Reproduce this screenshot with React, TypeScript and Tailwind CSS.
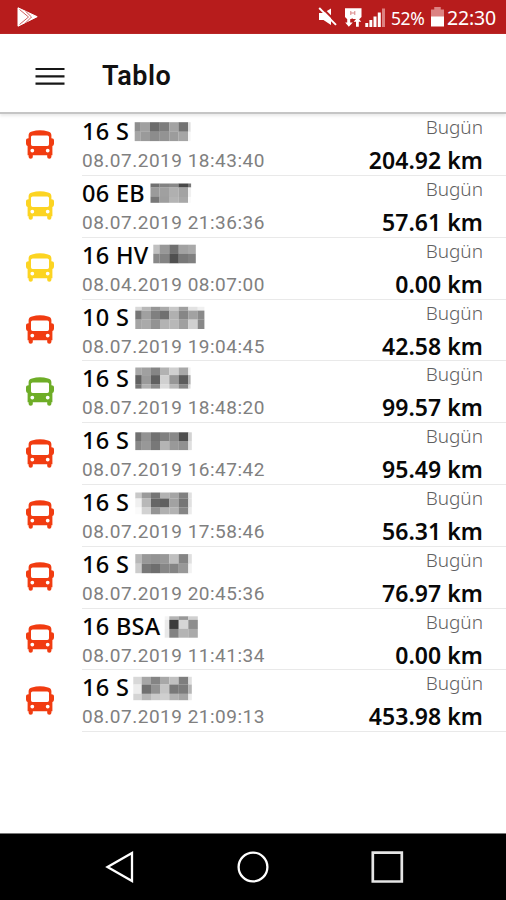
type Mosaic = { edges: number[]; tops: number[]; shades: string[] };
type Vehicle = {
  plate: string;
  date: string;
  km: string;
  tone: string;
  mosaic: Mosaic;
};

const RED = 'text-[#f13c11]';
const YELLOW = 'text-[#fcd422]';
const GREEN = 'text-[#6ead27]';

// Each shade row lists one grey level (two hex digits) per cell.
const vehicles: Vehicle[] = [
  { plate: '16 S', date: '08.07.2019 18:43:40', km: '204.92 km', tone: RED,
    mosaic: { edges: [134.7, 140.7, 150, 159.7, 169.3, 178.5, 188, 190.5], tops: [8.2, 17.7, 27], shades: ['8e a0 6c 7d a3 72 e0', 'a5 9a 8c 93 9c a5 f5'] } },
  { plate: '06 EB', date: '08.07.2019 21:36:36', km: '57.61 km', tone: YELLOW,
    mosaic: { edges: [150.5, 159.5, 169, 178.5, 188, 191], tops: [7.5, 11.5, 20.9, 26.7], shades: ['70 82 88 48 78', '9b a0 b0 a3 f0', '78 9e b4 a8 fa'] } },
  { plate: '16 HV', date: '08.04.2019 08:07:00', km: '0.00 km', tone: YELLOW,
    mosaic: { edges: [153.3, 159.5, 169.3, 178.7, 188, 195.7], tops: [6.7, 15.8, 25.2], shades: ['c0 98 70 a2 a9', '88 83 50 78 80'] } },
  { plate: '10 S', date: '08.07.2019 19:04:45', km: '42.58 km', tone: RED,
    mosaic: { edges: [135.3, 141.7, 151, 160, 169.3, 178.7, 188.3, 197.7, 204.3], tops: [6.8, 10.6, 19.6, 28.9], shades: ['d8 b8 96 aa c8 a0 e2 f0', '76 a0 80 70 b0 86 a2 8a', 'a4 aa 93 b3 b8 a0 d0 88'] } },
  { plate: '16 S', date: '08.07.2019 18:48:20', km: '99.57 km', tone: GREEN,
    mosaic: { edges: [135.3, 141.7, 151, 160, 169.3, 178.7, 188.3, 190.5], tops: [6.5, 14.1, 23.5, 27.5], shades: ['a8 a0 85 b2 cf a8 f2', '60 9a 60 d0 97 5c b0', '76 b0 8c dc b8 88 e0'] } },
  { plate: '16 S', date: '08.07.2019 16:47:42', km: '95.49 km', tone: RED,
    mosaic: { edges: [135.3, 141.7, 151, 160, 169.3, 178.7, 188.3, 191.7], tops: [9.3, 18, 27], shades: ['70 92 70 80 88 4e d2', '88 98 78 b4 99 90 df'] } },
  { plate: '16 S', date: '08.07.2019 17:58:46', km: '56.31 km', tone: RED,
    mosaic: { edges: [135.3, 141.7, 151, 160, 169.3, 178.7, 188.3, 191.7], tops: [7.5, 13.5, 22.5, 29.2], shades: ['c8 9a 76 b2 a5 80 e0', 'f0 b8 66 60 a2 75 e0', 'fa d2 94 b0 b2 85 eb'] } },
  { plate: '16 S', date: '08.07.2019 20:45:36', km: '76.97 km', tone: RED,
    mosaic: { edges: [135.3, 141.7, 151, 160, 169.3, 178.7, 188.3, 191.7], tops: [7.1, 16.7, 26.1], shades: ['b8 98 93 98 bf 84 df', 'cc 78 6e 86 84 98 f2'] } },
  { plate: '16 BSA', date: '08.07.2019 11:41:34', km: '0.00 km', tone: RED,
    mosaic: { edges: [164.7, 169.3, 178.7, 188.3, 197.7], tops: [7.3, 10.9, 19.9, 28.6], shades: ['f4 b4 98 d0', 'ea 3c d6 8e', 'e8 82 b4 aa'] } },
  { plate: '16 S', date: '08.07.2019 21:09:13', km: '453.98 km', tone: RED,
    mosaic: { edges: [133.3, 141.7, 151, 160, 169.3, 178.7, 188.3, 191.7], tops: [6.8, 14.5, 23.8, 30.1], shades: ['d8 a6 84 a8 c0 7e df', 'ec 70 92 c5 78 7c b5', 'd4 b6 ca cf b2 a5 ec'] } },
];

function PlateMosaic({ mosaic }: { mosaic: Mosaic }) {
  const { edges, tops, shades } = mosaic;
  return (
    <svg width="130" height="32" viewBox="82 0 130 32" className="absolute left-0 top-0">
      {shades.map((line, r) =>
        line.split(' ').map((s, c) => (
          <rect
            key={`${r}-${c}`}
            x={edges[c]}
            y={tops[r]}
            width={edges[c + 1] - edges[c] + 0.1}
            height={tops[r + 1] - tops[r] + 0.1}
            fill={`#${s}${s}${s}`}
          />
        )),
      )}
    </svg>
  );
}

function BusIcon() {
  return (
    <svg width="28" height="29" viewBox="0 0 28 29" fill="currentColor">
      <path
        fillRule="evenodd"
        d="M2.6 5.2Q2.6 2.2 6 1.4Q14-.8 22 1.4Q25.4 2.2 25.4 5.2V8.2Q28 8.2 28 10.5V13.5Q28 15.6 26.4 16V25.2H25.4V27Q25.4 28.7 23.3 28.7Q21.2 28.7 21.2 27V25.2H6.8V27Q6.8 28.7 4.7 28.7Q2.6 28.7 2.6 27V25.2H1.6V16Q0 15.6 0 13.5V10.5Q0 8.2 2.6 8.2ZM6.6 5.4Q5 5.4 5 7V14.2Q5 16 6.6 16H21.4Q23 16 23 14.2V7Q23 5.4 21.4 5.4ZM6.3 18.7A1.9 1.9 0 1 0 6.3 22.5A1.9 1.9 0 1 0 6.3 18.7ZM21.7 18.7A1.9 1.9 0 1 0 21.7 22.5A1.9 1.9 0 1 0 21.7 18.7Z"
      />
    </svg>
  );
}

function Row({ v }: { v: Vehicle }) {
  return (
    <li className="flex h-[61.8px] pl-[26px]">
      <div className={`w-14 shrink-0 pt-[15.5px] ${v.tone}`}>
        <BusIcon />
      </div>
      <div className="relative flex grow justify-between border-b border-[#e9e9e9] pr-[23px]">
        <PlateMosaic mosaic={v.mosaic} />
        <div className="flex flex-col whitespace-nowrap">
          <span className="pt-1 font-['Noto_Sans'] text-[23.5px] leading-[26px] font-medium tracking-[0.3px] text-[#040404]">{v.plate}</span>
          <span className="pt-[5px] font-['Roboto'] text-[19px] leading-[24px] font-normal tracking-[0.5px] text-[#808080]">{v.date}</span>
        </div>
        <div className="flex flex-col items-end whitespace-nowrap font-['Noto_Sans']">
          <span className="text-[19px] leading-[26px] font-light text-[#606060]">Bugün</span>
          <span className="pt-[7px] text-[23px] leading-[26px] font-semibold tracking-[0.05px] text-[#080808]">{v.km}</span>
        </div>
      </div>
    </li>
  );
}

function StatusBar() {
  return (
    <header className="flex h-[34px] shrink-0 items-center justify-between bg-[#b71c1c] pr-2 pl-[17px] text-white">
      <svg width="21" height="20" viewBox="0 0 21 20">
        <path d="M1 .8L20.2 9.7L1 19.2Z" fill="#fff" stroke="#fff" strokeLinejoin="round" />
        <path d="M2.5 2.5L11.5 10L2.5 17.5M8.5 4.2L14.5 10L8.5 16" fill="none" stroke="#d06060" strokeWidth="1" />
      </svg>
      <div className="flex items-center">
        <svg width="69" height="24" viewBox="317 5 69 24" fill="#fff">
          <path d="M319 13H323.5L331 8.5V25L323.5 20H319Z" />
          <path d="M321 6.8L338 23.8" stroke="#b71c1c" strokeWidth="2" />
          <path d="M319.2 8L336 24.8" stroke="#fff" strokeWidth="1.9" />
          <path d="M345 8.3H361.5V17L359.5 19H347L345 17Z" />
          <path d="M350.8 11V15M354.8 11V15M350.8 13H354.8" stroke="#d98484" strokeWidth="1" />
          <path d="M347.2 17H350.2V22.5H352.8L348.8 26.8L345.2 22.5H347.2ZM356 26.8V21.8H353.6L357.6 17.2L361.2 21.8H358.8V26.8Z" />
          <path d="M352.2 18.5V22" stroke="#b71c1c" strokeWidth="1.4" />
          <path d="M365.3 23H368.2V27H365.3ZM369.4 20H372.3V27H369.4ZM373.5 16.5H376.5V27H373.5ZM377.8 12.5H380.8V27H377.8Z" />
          <path d="M382 8.5H385V27H382Z" fill="#dc8181" />
        </svg>
        <span className="ml-[5px] w-[34px] pt-0.5 font-['Noto_Sans'] text-[17.5px] leading-6 tracking-[-0.4px]">52%</span>
        <svg width="13" height="20" viewBox="0 0 14 20" preserveAspectRatio="none" className="ml-[6px]">
          <path d="M3.5 0H10.5V2.5H14V10H0V2.5H3.5Z" fill="#dc8282" />
          <path d="M0 9.5H14V19.5H0Z" fill="#fff" />
        </svg>
        <span className="ml-[3px] w-[51px] pt-0.5 font-['Noto_Sans'] text-[19.5px] leading-6 tracking-[-0.2px]">22:30</span>
      </div>
    </header>
  );
}

export default function App() {
  return (
    <div className="flex h-[900px] w-[506px] flex-col overflow-hidden bg-white">
      <StatusBar />
      <div className="flex h-[80.2px] shrink-0 items-center border-b-2 border-[#c5c5c5] pl-[35px] shadow-[0_2px_3px_#e9e9e9]">
        <svg width="30" height="20" viewBox="0 0 30 20" className="mt-1.5">
          <path d="M.5 3H29.5M.5 10.3H29.5M.5 17.6H29.5" stroke="#171717" strokeWidth="2.2" />
        </svg>
        <h1 className="ml-[37px] pt-1.5 font-['Roboto'] text-[27px] leading-8 font-semibold tracking-[0.5px] text-[#111]">Tablo</h1>
      </div>
      <ul className="grow">
        {vehicles.map((v) => (
          <Row key={v.date} v={v} />
        ))}
      </ul>
      <nav className="flex h-[67px] shrink-0 items-center border-t border-[#777] bg-black pl-[105px]">
        <svg width="300" height="34" viewBox="0 0 300 34" fill="none" stroke="#fff" strokeWidth="2.3">
          <path d="M2.5 17L27 3V31Z" />
          <circle cx="148" cy="17" r="14.4" />
          <path d="M267.8 2.7H296.8V31.5H267.8Z" stroke="#e5e5e5" strokeWidth="2.7" />
        </svg>
      </nav>
    </div>
  );
}
